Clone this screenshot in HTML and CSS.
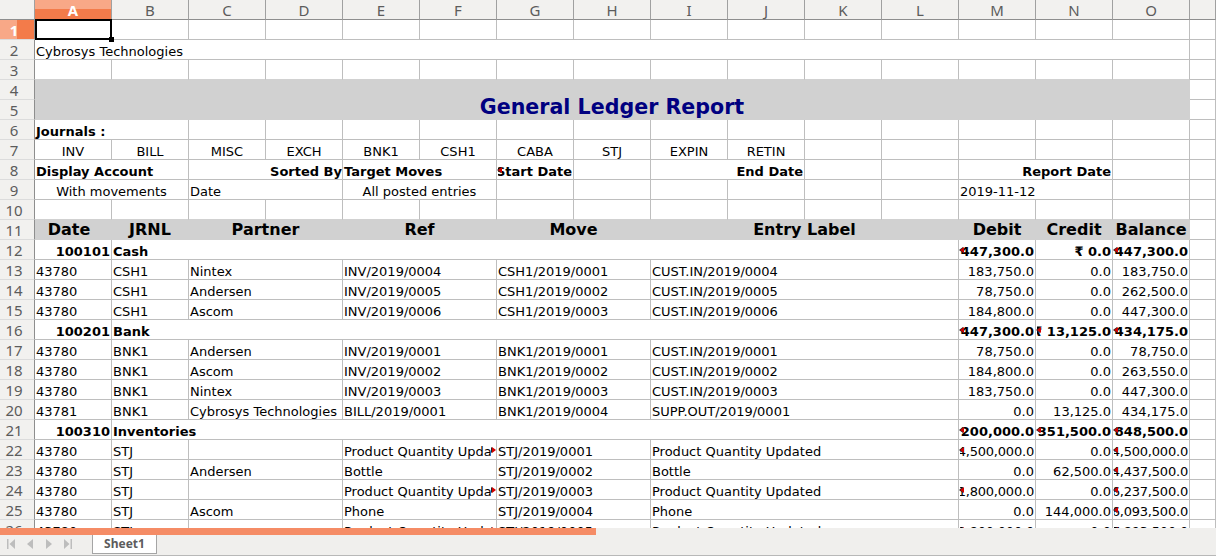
FILE: index.html
```html
<!DOCTYPE html>
<html lang="en">
<head>
  <meta charset="UTF-8" />
  <title>General Ledger Report</title>
  <link rel="stylesheet" href="styles.css">
</head>
<body>

  <!-- Sheet grid -->
  <div class="sheet">
    <table>
      <colgroup>
        <col class="col-head"><col span="15" class="col-std"><col class="col-rest">
      </colgroup>
      <thead>
        <tr>
          <th class="corner"></th><th class="on">A</th><th>B</th><th>C</th><th>D</th><th>E</th><th>F</th><th>G</th><th>H</th><th>I</th><th>J</th><th>K</th><th>L</th><th>M</th><th>N</th><th>O</th><th></th>
        </tr>
      </thead>
      <tbody>
        <tr><th class="on">1</th><td class="active"><i class="cursor"></i><i class="handle"></i></td><td></td><td></td><td></td><td></td><td></td><td></td><td></td><td></td><td></td><td></td><td></td><td></td><td></td><td></td><td></td></tr>
        <tr><th>2</th><td colspan="15">Cybrosys Technologies</td><td></td></tr>
        <tr class="pre-band"><th>3</th><td></td><td></td><td></td><td></td><td></td><td></td><td></td><td></td><td></td><td></td><td></td><td></td><td></td><td></td><td></td><td></td></tr>
        <tr><th>4</th><td colspan="15" rowspan="2" class="band title">General Ledger Report</td><td></td></tr>
        <tr><th>5</th><td></td></tr>
        <tr><th>6</th><td colspan="2" class="b">Journals :</td><td></td><td></td><td></td><td></td><td></td><td></td><td></td><td></td><td></td><td></td><td></td><td></td><td></td><td></td></tr>
        <tr class="center"><th>7</th><td>INV</td><td>BILL</td><td>MISC</td><td>EXCH</td><td>BNK1</td><td>CSH1</td><td>CABA</td><td>STJ</td><td>EXPIN</td><td>RETIN</td><td></td><td></td><td></td><td></td><td></td><td></td></tr>
        <tr class="strong"><th>8</th><td colspan="2">Display Account</td><td colspan="2" class="r flush">Sorted By</td><td colspan="2">Target Moves</td><td class="over"><div class="fit">Start Date</div><i class="mark-l"></i></td><td></td><td colspan="2" class="r">End Date</td><td></td><td></td><td colspan="2" class="r">Report Date</td><td></td><td></td></tr>
        <tr><th>9</th><td colspan="2" class="c">With movements</td><td colspan="2">Date</td><td colspan="2" class="c">All posted entries</td><td></td><td></td><td></td><td></td><td></td><td></td><td colspan="2">2019-11-12</td><td></td><td></td></tr>
        <tr class="pre-band"><th>10</th><td></td><td></td><td></td><td></td><td></td><td></td><td></td><td></td><td></td><td></td><td></td><td></td><td></td><td></td><td></td><td></td></tr>
        <tr class="heading"><th>11</th><td class="band date-head">Date</td><td class="band">JRNL</td><td colspan="2" class="band">Partner</td><td colspan="2" class="band">Ref</td><td colspan="2" class="band">Move</td><td colspan="4" class="band">Entry Label</td><td class="band">Debit</td><td class="band">Credit</td><td class="band">Balance</td><td class="plain"></td></tr>

        <tr class="strong"><th>12</th><td class="r">100101</td><td colspan="11">Cash</td><td class="over"><div class="fit">₹ 447,300.0</div><i class="mark-l"></i></td><td class="r">₹ 0.0</td><td class="over"><div class="fit">₹ 447,300.0</div><i class="mark-l"></i></td><td></td></tr>
        <tr><th>13</th><td>43780</td><td>CSH1</td><td colspan="2">Nintex</td><td colspan="2">INV/2019/0004</td><td colspan="2">CSH1/2019/0001</td><td colspan="4">CUST.IN/2019/0004</td><td class="r">183,750.0</td><td class="r">0.0</td><td class="r">183,750.0</td><td></td></tr>
        <tr><th>14</th><td>43780</td><td>CSH1</td><td colspan="2">Andersen</td><td colspan="2">INV/2019/0005</td><td colspan="2">CSH1/2019/0002</td><td colspan="4">CUST.IN/2019/0005</td><td class="r">78,750.0</td><td class="r">0.0</td><td class="r">262,500.0</td><td></td></tr>
        <tr><th>15</th><td>43780</td><td>CSH1</td><td colspan="2">Ascom</td><td colspan="2">INV/2019/0006</td><td colspan="2">CSH1/2019/0003</td><td colspan="4">CUST.IN/2019/0006</td><td class="r">184,800.0</td><td class="r">0.0</td><td class="r">447,300.0</td><td></td></tr>

        <tr class="strong"><th>16</th><td class="r">100201</td><td colspan="11">Bank</td><td class="over"><div class="fit">₹ 447,300.0</div><i class="mark-l"></i></td><td class="over"><div class="fit">₹ 13,125.0</div><i class="mark-l"></i></td><td class="over"><div class="fit">₹ 434,175.0</div><i class="mark-l"></i></td><td></td></tr>
        <tr><th>17</th><td>43780</td><td>BNK1</td><td colspan="2">Andersen</td><td colspan="2">INV/2019/0001</td><td colspan="2">BNK1/2019/0001</td><td colspan="4">CUST.IN/2019/0001</td><td class="r">78,750.0</td><td class="r">0.0</td><td class="r">78,750.0</td><td></td></tr>
        <tr><th>18</th><td>43780</td><td>BNK1</td><td colspan="2">Ascom</td><td colspan="2">INV/2019/0002</td><td colspan="2">BNK1/2019/0002</td><td colspan="4">CUST.IN/2019/0002</td><td class="r">184,800.0</td><td class="r">0.0</td><td class="r">263,550.0</td><td></td></tr>
        <tr><th>19</th><td>43780</td><td>BNK1</td><td colspan="2">Nintex</td><td colspan="2">INV/2019/0003</td><td colspan="2">BNK1/2019/0003</td><td colspan="4">CUST.IN/2019/0003</td><td class="r">183,750.0</td><td class="r">0.0</td><td class="r">447,300.0</td><td></td></tr>
        <tr><th>20</th><td>43781</td><td>BNK1</td><td colspan="2">Cybrosys Technologies</td><td colspan="2">BILL/2019/0001</td><td colspan="2">BNK1/2019/0004</td><td colspan="4">SUPP.OUT/2019/0001</td><td class="r">0.0</td><td class="r">13,125.0</td><td class="r">434,175.0</td><td></td></tr>

        <tr class="strong"><th>21</th><td class="r">100310</td><td colspan="11">Inventories</td><td class="over"><div class="fit">₹ 8,200,000.0</div><i class="mark-l"></i></td><td class="over"><div class="fit">₹ 351,500.0</div><i class="mark-l"></i></td><td class="over"><div class="fit">₹ 7,848,500.0</div><i class="mark-l"></i></td><td></td></tr>
        <tr><th>22</th><td>43780</td><td>STJ</td><td colspan="2"></td><td colspan="2" class="over"><div class="cut">Product Quantity Updated</div><i class="mark-r"></i></td><td colspan="2">STJ/2019/0001</td><td colspan="4">Product Quantity Updated</td><td class="over"><div class="fit">4,500,000.0</div><i class="mark-l"></i></td><td class="r">0.0</td><td class="over"><div class="fit">4,500,000.0</div><i class="mark-l"></i></td><td></td></tr>
        <tr><th>23</th><td>43780</td><td>STJ</td><td colspan="2">Andersen</td><td colspan="2">Bottle</td><td colspan="2">STJ/2019/0002</td><td colspan="4">Bottle</td><td class="r">0.0</td><td class="r">62,500.0</td><td class="over"><div class="fit">4,437,500.0</div><i class="mark-l"></i></td><td></td></tr>
        <tr><th>24</th><td>43780</td><td>STJ</td><td colspan="2"></td><td colspan="2" class="over"><div class="cut">Product Quantity Updated</div><i class="mark-r"></i></td><td colspan="2">STJ/2019/0003</td><td colspan="4">Product Quantity Updated</td><td class="over"><div class="fit">1,800,000.0</div><i class="mark-l"></i></td><td class="r">0.0</td><td class="over"><div class="fit">6,237,500.0</div><i class="mark-l"></i></td><td></td></tr>
        <tr><th>25</th><td>43780</td><td>STJ</td><td colspan="2">Ascom</td><td colspan="2">Phone</td><td colspan="2">STJ/2019/0004</td><td colspan="4">Phone</td><td class="r">0.0</td><td class="r">144,000.0</td><td class="over"><div class="fit">6,093,500.0</div><i class="mark-l"></i></td><td></td></tr>
        <tr><th>26</th><td>43780</td><td>STJ</td><td colspan="2"></td><td colspan="2" class="over"><div class="cut">Product Quantity Updated</div><i class="mark-r"></i></td><td colspan="2">STJ/2019/0005</td><td colspan="4">Product Quantity Updated</td><td class="over"><div class="fit">1,800,000.0</div><i class="mark-l"></i></td><td class="r">0.0</td><td class="over"><div class="fit">7,893,500.0</div><i class="mark-l"></i></td><td></td></tr>
      </tbody>
    </table>
  </div>

  <!-- Horizontal scrollbar -->
  <div class="scroll"><div class="thumb"></div></div>

  <!-- Sheet tabs -->
  <div class="tabs">
    <div class="nav">
      <svg viewBox="0 0 8 10" class="nav-icon"><path d="M0 0h1.5v10H0zM8 0v10L2.5 5z"/></svg>
      <svg viewBox="0 0 8 10" class="nav-icon"><path d="M7 0v10L1 5z"/></svg>
      <svg viewBox="0 0 8 10" class="nav-icon"><path d="M1 0v10l6-5z"/></svg>
      <svg viewBox="0 0 8 10" class="nav-icon"><path d="M8 0H6.5v10H8zM0 0v10l5.5-5z"/></svg>
    </div>
    <div class="tab">Sheet1</div>
  </div>

</body>
</html>
```

FILE: styles.css
```css
html, body {
  margin: 0;
  height: 100%;
  overflow: hidden;
  background: white;
}
body {
  display: flex;
  flex-direction: column;
  height: 557px;
  font-family: "DejaVu Sans", sans-serif;
  font-size: 13px;
  color: black;
}

/* grid */
.sheet {
  height: 528px;
  flex: none;
  overflow: hidden;
}
table {
  width: 1216px;
  table-layout: fixed;
  border-collapse: separate;
  border-spacing: 0;
}
.col-head { width: 35px; }
.col-std { width: 77px; }
.col-rest { width: 26px; }
tr { height: 20px; }
td {
  box-sizing: border-box;
  height: 20px;
  padding: 4px 1px 0;
  position: relative;
  line-height: 15px;
  white-space: nowrap;
  overflow: hidden;
  border-right: 1px solid #bebebe;
  border-bottom: 1px solid #bebebe;
}
.b, .strong td { font-weight: bold; }
.c, .center td { text-align: center; }
.r { text-align: right; }
td.flush { padding-right: 0; }

/* headers */
th {
  box-sizing: border-box;
  height: 20px;
  padding: 1px 0 0;
  background: #f2f1ef;
  color: #5c5c5c;
  font-family: "Noto Sans", sans-serif;
  font-size: 15px;
  font-weight: normal;
  line-height: 18px;
  border-right: 1px solid #a0a0a0;
  border-bottom: 1px solid #8e8e8e;
}
tbody th {
  padding-right: 6px;
  border-right: 1px solid #8e8e8e;
  border-bottom: 1px solid #dcdcdc;
}
th.on {
  color: white;
  font-weight: bold;
  background: linear-gradient(#f8a887 50%, #f37b4a 50%);
}
tbody th.on {
  background: linear-gradient(90deg, #f8a887 50%, #f37b4a 50%);
}

/* grey bands */
.pre-band td { border-bottom-color: #d1d1d1; }
.pre-band td:last-child { border-bottom-color: #bebebe; }
.band {
  background: #d1d1d1;
  border-color: #d1d1d1;
}
.title {
  text-align: center;
  vertical-align: bottom;
  font-size: 20.6px;
  font-weight: bold;
  color: navy;
  line-height: 23px;
  padding-bottom: 0;
}
.heading td {
  text-align: center;
  font-size: 16px;
  font-weight: bold;
  padding-top: 0;
  line-height: 19px;
}
.heading td.plain { border-color: #bebebe; }
.heading td.date-head { padding-right: 9px; }

/* clipped text */
.fit {
  display: flex;
  justify-content: flex-end;
  overflow: hidden;
}
tr:not(.strong) .fit { letter-spacing: -0.2px; }
.cut {
  overflow: hidden;
  margin-right: 4px;
}
.mark-l, .mark-r {
  position: absolute;
  top: 7px;
  width: 0;
  height: 0;
  border-top: 3px solid transparent;
  border-bottom: 3px solid transparent;
}
.mark-l {
  left: 1px;
  border-right: 4px solid #d40000;
  filter: drop-shadow(-1px 0 0 #222);
}
.mark-r {
  right: 0;
  border-left: 4px solid #d40000;
  filter: drop-shadow(-1px 0 0 #222);
}

/* cell cursor */
.active { overflow: visible; }
.cursor {
  position: absolute;
  left: 0;
  top: -1px;
  width: 77px;
  height: 21px;
  box-sizing: border-box;
  border: 2px solid black;
}
.handle {
  position: absolute;
  left: 74px;
  top: 17px;
  width: 5px;
  height: 5px;
  background: black;
  z-index: 1;
}

/* scrollbar */
.scroll {
  height: 6px;
  flex: none;
  background: #f0efed;
}
.thumb {
  width: 596px;
  height: 7px;
  background: #f58c66;
  position: relative;
}

/* tabs */
.tabs {
  height: 21px;
  flex: none;
  display: flex;
  align-items: flex-start;
  background: #f0efed;
  border-bottom: 1px solid #b8b8b8;
}
.nav {
  width: 92px;
  display: flex;
  gap: 11px;
  padding: 5px 0 0 7px;
  box-sizing: border-box;
}
.nav-icon {
  width: 8px;
  height: 10px;
  fill: #bdbdbd;
}
.tab {
  width: 65px;
  height: 20px;
  box-sizing: border-box;
  padding-top: 1px;
  background: white;
  border: 1px solid #a5a5a5;
  border-top: none;
  text-align: center;
  color: #5c5c5c;
  font-family: "Noto Sans", sans-serif;
  font-size: 12px;
  font-weight: bold;
  line-height: 18px;
}
```
